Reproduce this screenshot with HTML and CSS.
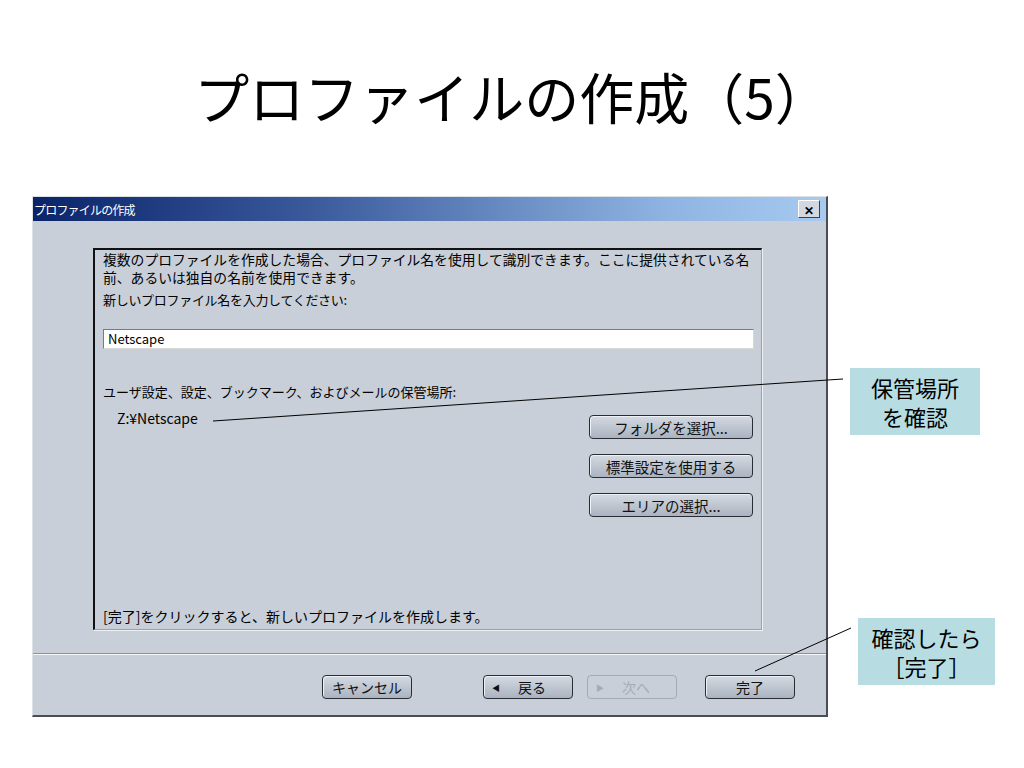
FILE: index.html
```html
<!DOCTYPE html>
<html lang="ja">
<head>
    <meta charset="UTF-8">
    <title>プロファイルの作成（5）</title>
    <link rel="stylesheet" href="styles.css">
</head>
<body>
    <div class="slide">
        <h1 class="slide-title">プロファイルの作成（5）</h1>

        <div class="dialog">
            <div class="titlebar">
                <span class="titlebar-text">プロファイルの作成</span>
                <span class="close-box">&#x2715;</span>
            </div>

            <div class="dialog-body">
                <div class="panel">
                    <p class="intro">複数のプロファイルを作成した場合、プロファイル名を使用して識別できます。ここに提供されている名<br>前、あるいは独自の名前を使用できます。</p>
                    <p class="prompt">新しいプロファイル名を入力してください:</p>
                    <div class="name-field">Netscape</div>
                    <p class="location-label">ユーザ設定、設定、ブックマーク、およびメールの保管場所:</p>
                    <div class="location-row">
                        <span class="location-path">Z:¥Netscape</span>
                        <div class="location-buttons">
                            <span class="btn">フォルダを選択...</span>
                            <span class="btn">標準設定を使用する</span>
                            <span class="btn">エリアの選択...</span>
                        </div>
                    </div>
                    <p class="finish-note">[完了]をクリックすると、新しいプロファイルを作成します。</p>
                </div>
            </div>

            <div class="separator"></div>

            <div class="footer">
                <span class="btn btn-cancel">キャンセル</span>
                <span class="btn btn-back"><span class="arrow">&#9664;</span>戻る</span>
                <span class="btn btn-next disabled"><span class="arrow">&#9654;</span>次へ</span>
                <span class="btn btn-finish">完了</span>
            </div>
        </div>

        <!-- 吹き出しの引き出し線 -->
        <svg class="leaders" width="1024" height="768" viewBox="0 0 1024 768">
            <line x1="213" y1="421" x2="843" y2="379" stroke="#000" stroke-width="1"/>
            <line x1="755" y1="671" x2="851" y2="628" stroke="#000" stroke-width="1"/>
        </svg>

        <div class="callout callout-location">
            <span>保管場所</span>
            <span>を確認</span>
        </div>
        <div class="callout callout-finish">
            <span>確認したら</span>
            <span>［完了］</span>
        </div>
    </div>
</body>
</html>
```

FILE: styles.css
```css
* {
    box-sizing: border-box;
}

body {
    margin: 0;
    padding: 0;
    background-color: #fff;
    font-family: "Noto Sans CJK JP", "Liberation Sans", sans-serif;
    color: #000;
}

.slide {
    position: relative;
    width: 1024px;
    height: 768px;
    overflow: hidden;
}

.slide-title {
    margin: 0;
    padding-top: 57px;
    font-size: 55px;
    line-height: 76px;
    font-weight: normal;
    text-align: center;
}

.dialog {
    width: 796px;
    margin: 63px 0 0 32px;
    background-color: #c8cfd8;
    border-top: 1px solid #dde1e6;
    border-left: 1px solid #dde1e6;
    border-right: 2px solid #4a4e54;
    border-bottom: 2px solid #4a4e54;
    font-size: 13px;
}

.titlebar {
    height: 24px;
    display: flex;
    align-items: center;
    justify-content: space-between;
    padding: 0 6px 0 1px;
    background: linear-gradient(to right, #0a246a 0%, #3a5a9c 35%, #8fb4e2 80%, #a6caf0 100%);
}

.titlebar-text {
    color: #fff;
    font-size: 12px;
    letter-spacing: -0.8px;
}

.close-box {
    flex-shrink: 0;
    width: 22px;
    height: 18px;
    display: flex;
    align-items: center;
    justify-content: center;
    background-color: #d4d8de;
    border-top: 1px solid #fff;
    border-left: 1px solid #fff;
    border-right: 1px solid #404040;
    border-bottom: 1px solid #404040;
    font-size: 12px;
    font-weight: bold;
    color: #000;
}

.dialog-body {
    padding: 27px 0 0 60px;
}

.panel {
    width: 669px;
    height: 382px;
    display: flex;
    flex-direction: column;
    padding: 0 8px 2px 8px;
    border-top: 2px solid #111;
    border-left: 2px solid #111;
    border-right: 1px solid #9aa2ac;
    border-bottom: 1px solid #9aa2ac;
    box-shadow: 1px 1px 0 #eef1f4;
}

.panel p {
    margin: 0;
    line-height: 18px;
    white-space: nowrap;
}

.intro {
    font-size: 13.8px;
}

.prompt {
    margin-top: 5px !important;
    letter-spacing: -0.3px;
}

.name-field {
    margin-top: 20px;
    width: 651px;
    height: 20px;
    padding: 0 4px;
    line-height: 18px;
    background-color: #fff;
    border-top: 1px solid #7a7a7a;
    border-left: 1px solid #7a7a7a;
    border-right: 1px solid #d8d8d8;
    border-bottom: 1px solid #d8d8d8;
}

.location-label {
    margin-top: 34px !important;
}

.location-row {
    margin-top: 8px;
    display: flex;
    justify-content: space-between;
    align-items: flex-start;
}

.location-path {
    padding-left: 14px;
    line-height: 18px;
    font-size: 14px;
}

.location-buttons {
    display: flex;
    flex-direction: column;
    gap: 15px;
    padding-top: 6px;
}

.location-buttons .btn {
    width: 164px;
}

.btn {
    display: flex;
    align-items: center;
    justify-content: center;
    height: 24px;
    border: 1px solid #2a2e34;
    border-radius: 4px;
    background: linear-gradient(#d4dae2, #aab3c0);
    box-shadow: inset 1px 1px 0 #eef1f5;
    font-size: 14.5px;
    color: #111;
}

.finish-note {
    margin-top: auto !important;
    padding-bottom: 2px;
    font-size: 14px;
}

.separator {
    margin-top: 23px;
    height: 2px;
    border-top: 1px solid #8c939c;
    border-bottom: 1px solid #f3f5f8;
}

.footer {
    display: flex;
    justify-content: flex-end;
    padding: 20px 31px 16px 0;
}

.footer .btn {
    width: 90px;
    font-size: 14px;
}

.btn-cancel {
    margin-right: 71px;
}

.btn-back {
    margin-right: 14px;
    justify-content: flex-start;
    padding-left: 8px;
}

.btn-next {
    margin-right: 28px;
    justify-content: flex-start;
    padding-left: 8px;
}

.arrow {
    font-size: 8px;
    width: 26px;
}

.btn.disabled {
    color: #a3abb6;
    border-color: #a3abb6;
    background: #c8cfd8;
    box-shadow: none;
}

.leaders {
    position: absolute;
    top: 0;
    left: 0;
    pointer-events: none;
}

.callout {
    position: absolute;
    display: flex;
    flex-direction: column;
    align-items: center;
    justify-content: center;
    text-align: center;
    background-color: #b7dde3;
    font-size: 22px;
    line-height: 32px;
}

.callout span {
    display: block;
    height: 29px;
    line-height: 29px;
}

.callout-location {
    left: 850px;
    top: 368px;
    width: 130px;
    height: 67px;
}

.callout-finish {
    left: 858px;
    top: 618px;
    width: 137px;
    height: 67px;
}
```
